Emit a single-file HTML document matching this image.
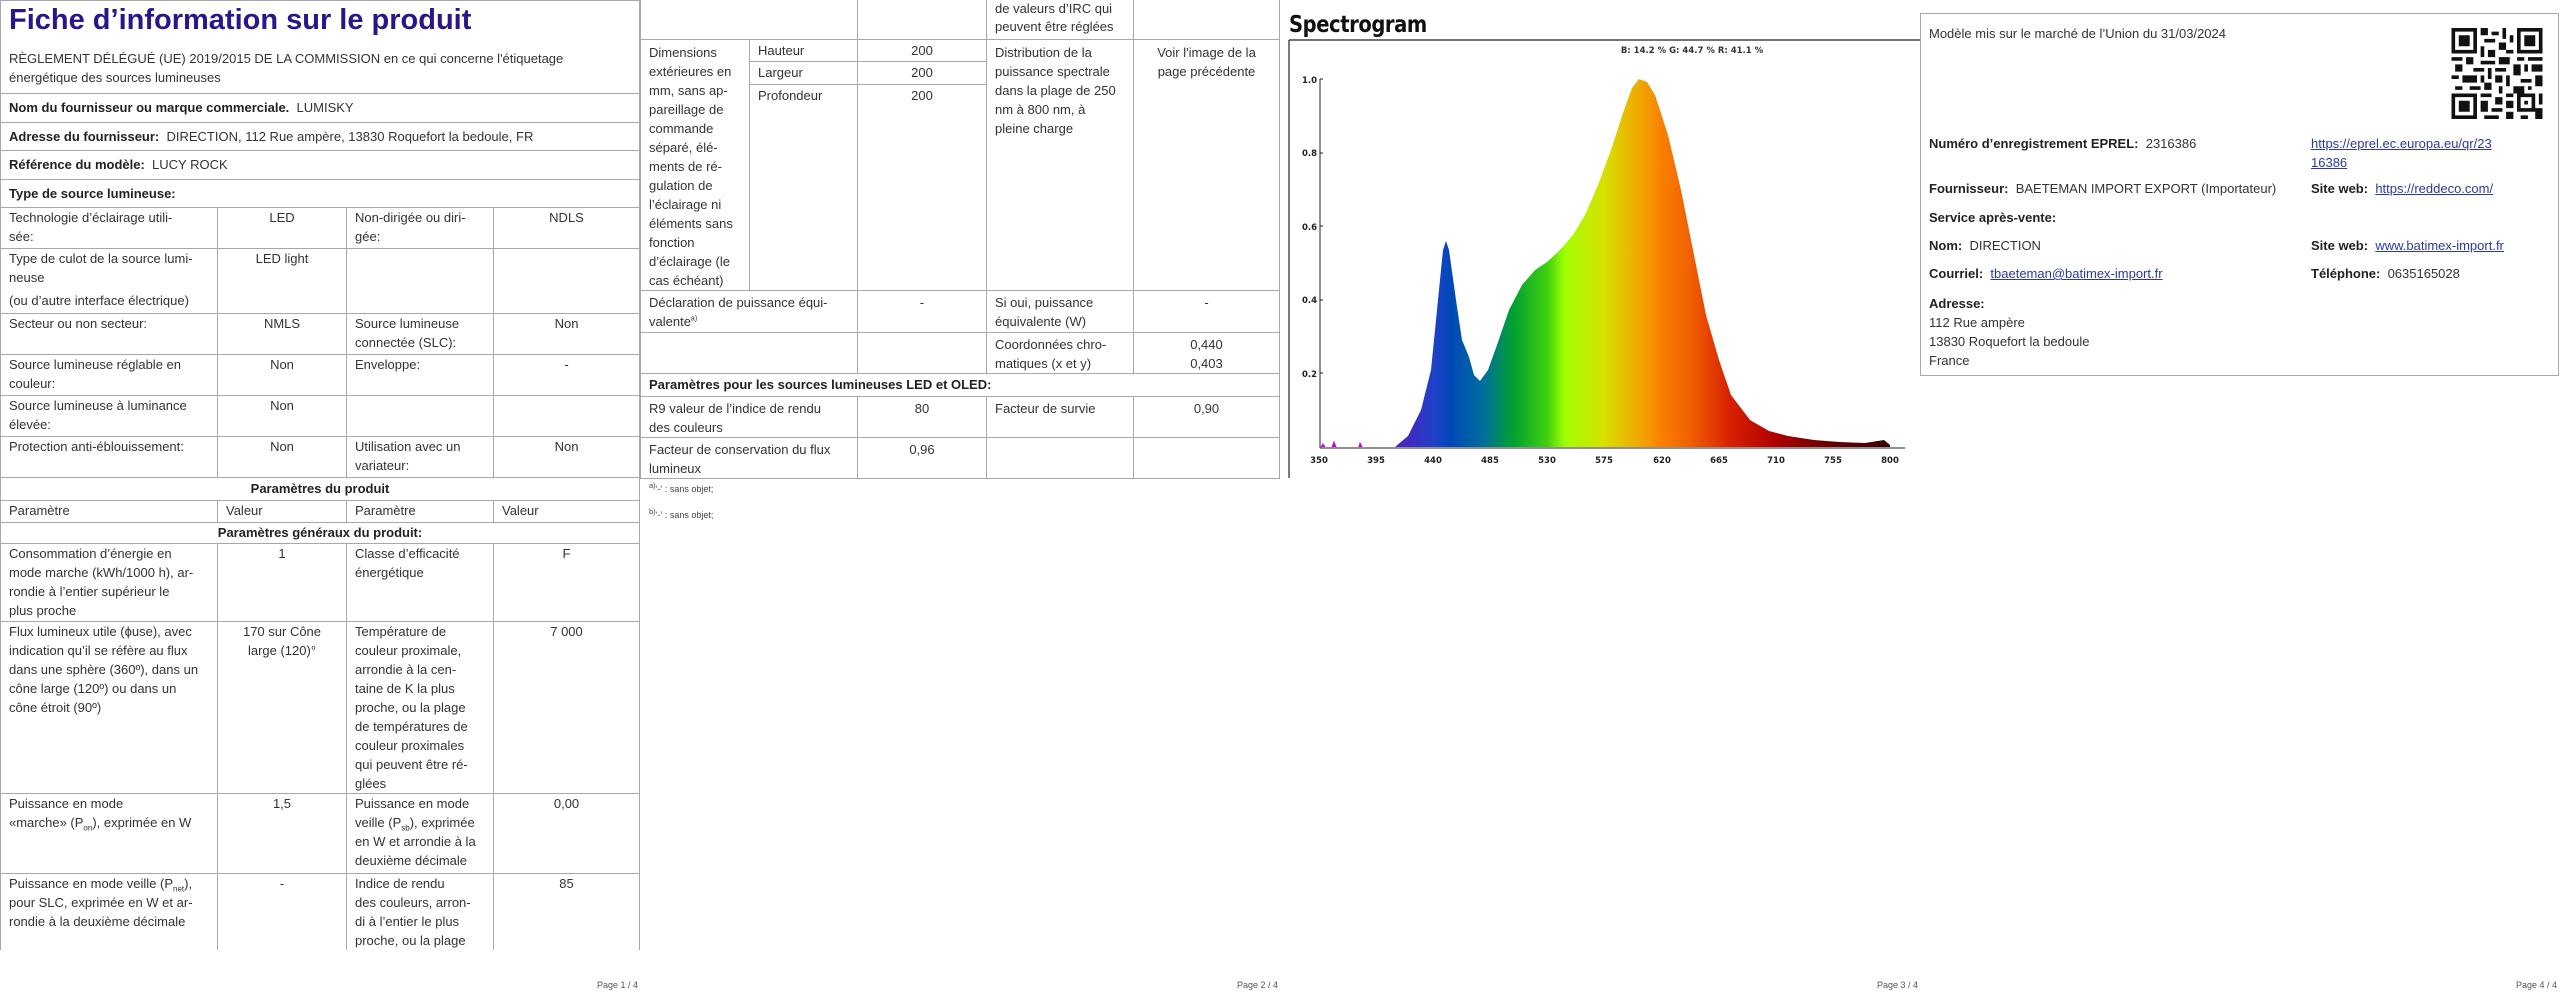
<!DOCTYPE html>
<html><head><meta charset="utf-8">
<style>
*{margin:0;padding:0;box-sizing:border-box}
body{width:2560px;height:1001px;background:#fff;position:relative;overflow:hidden;font-family:"Liberation Sans",sans-serif;color:#333;font-size:13px}
.pg{position:absolute;top:0;width:640px;height:1001px;overflow:hidden}
table{border-collapse:collapse;table-layout:fixed;position:absolute;left:0;top:0}
td{border:1px solid #a8a8a8;vertical-align:top;padding:0 8px;line-height:19px;font-size:13px;overflow:hidden;white-space:nowrap}
.c{text-align:center}
b{color:#222}
sub,sup{line-height:0}
.foot{position:absolute;top:980px;font-size:9px;color:#555}
a{color:#2b3a9c;text-decoration:underline}
</style></head><body>

<!-- PAGE 1 -->
<div class="pg" style="left:0;height:950px">
<table style="width:639px">
<colgroup><col style="width:217px"><col style="width:129px"><col style="width:147px"><col style="width:146px"></colgroup>
<tr style="height:93px"><td colspan="4" style="padding-top:2px">
<div style="font-size:29px;font-weight:bold;color:#2a168a;line-height:34px;white-space:nowrap">Fiche d’information sur le produit</div>
<div style="margin-top:12px;line-height:19px">RÈGLEMENT DÉLÉGUÉ (UE) 2019/2015 DE LA COMMISSION en ce qui concerne l'étiquetage<br>énergétique des sources lumineuses</div></td></tr>
<tr style="height:29px"><td colspan="4" style="padding-top:4px"><b>Nom du fournisseur ou marque commerciale.</b>&nbsp; LUMISKY</td></tr>
<tr style="height:28px"><td colspan="4" style="padding-top:4px"><b>Adresse du fournisseur:</b>&nbsp; DIRECTION, 112 Rue ampère, 13830 Roquefort la bedoule, FR</td></tr>
<tr style="height:29px"><td colspan="4" style="padding-top:4px"><b>Référence du modèle:</b>&nbsp; LUCY ROCK</td></tr>
<tr style="height:28px"><td colspan="4" style="padding-top:4px"><b>Type de source lumineuse:</b></td></tr>
<tr style="height:41px"><td>Technologie d’éclairage utili-<br>sée:</td><td class="c">LED</td><td>Non-dirigée ou diri-<br>gée:</td><td class="c">NDLS</td></tr>
<tr style="height:65px"><td>Type de culot de la source lumi-<br>neuse<div style="margin-top:4px">(ou d’autre interface électrique)</div></td><td class="c">LED light</td><td></td><td></td></tr>
<tr style="height:41px"><td>Secteur ou non secteur:</td><td class="c">NMLS</td><td>Source lumineuse<br>connectée (SLC):</td><td class="c">Non</td></tr>
<tr style="height:41px"><td>Source lumineuse réglable en<br>couleur:</td><td class="c">Non</td><td>Enveloppe:</td><td class="c">-</td></tr>
<tr style="height:41px"><td>Source lumineuse à luminance<br>élevée:</td><td class="c">Non</td><td></td><td></td></tr>
<tr style="height:41px"><td>Protection anti-éblouissement:</td><td class="c">Non</td><td>Utilisation avec un<br>variateur:</td><td class="c">Non</td></tr>
<tr style="height:23px"><td colspan="4" class="c" style="padding-top:1px"><b>Paramètres du produit</b></td></tr>
<tr style="height:22px"><td>Paramètre</td><td>Valeur</td><td>Paramètre</td><td>Valeur</td></tr>
<tr style="height:21px"><td colspan="4" class="c"><b>Paramètres généraux du produit:</b></td></tr>
<tr style="height:78px"><td>Consommation d’énergie en<br>mode marche (kWh/1000 h), ar-<br>rondie à l’entier supérieur le<br>plus proche</td><td class="c">1</td><td>Classe d’efficacité<br>énergétique</td><td class="c">F</td></tr>
<tr style="height:172px"><td>Flux lumineux utile (ϕuse), avec<br>indication qu’il se réfère au flux<br>dans une sphère (360º), dans un<br>cône large (120º) ou dans un<br>cône étroit (90º)</td><td class="c">170 sur Cône<br>large (120)°</td><td>Température de<br>couleur proximale,<br>arrondie à la cen-<br>taine de K la plus<br>proche, ou la plage<br>de températures de<br>couleur proximales<br>qui peuvent être ré-<br>glées</td><td class="c">7 000</td></tr>
<tr style="height:80px"><td>Puissance en mode<br>«marche» (P<sub style="font-size:8px">on</sub>), exprimée en W</td><td class="c">1,5</td><td>Puissance en mode<br>veille (P<sub style="font-size:8px">sb</sub>), exprimée<br>en W et arrondie à la<br>deuxième décimale</td><td class="c">0,00</td></tr>
<tr style="height:100px"><td>Puissance en mode veille (P<sub style="font-size:8px">net</sub>),<br>pour SLC, exprimée en W et ar-<br>rondie à la deuxième décimale</td><td class="c">-</td><td>Indice de rendu<br>des couleurs, arron-<br>di à l’entier le plus<br>proche, ou la plage</td><td class="c">85</td></tr>
</table>
</div>
<div class="foot" style="left:597px">Page 1 / 4</div>

<!-- PAGE 2 -->
<div class="pg" style="left:640px">
<table style="width:639px;top:-1px">
<colgroup><col style="width:109px"><col style="width:108px"><col style="width:129px"><col style="width:147px"><col style="width:146px"></colgroup>
<tr style="height:40px"><td colspan="2"></td><td></td><td style="line-height:18px">de valeurs d’IRC qui<br>peuvent être réglées</td><td></td></tr>
<tr style="height:22px"><td rowspan="3" style="padding-top:3px">Dimensions<br>extérieures en<br>mm, sans ap-<br>pareillage de<br>commande<br>séparé, élé-<br>ments de ré-<br>gulation de<br>l’éclairage ni<br>éléments sans<br>fonction<br>d’éclairage (le<br>cas échéant)</td><td style="padding-top:1px">Hauteur</td><td class="c" style="padding-top:1px">200</td><td rowspan="3" style="padding-top:3px">Distribution de la<br>puissance spectrale<br>dans la plage de 250<br>nm à 800 nm, à<br>pleine charge</td><td rowspan="3" class="c" style="padding-top:3px">Voir l'image de la<br>page précédente</td></tr>
<tr style="height:22px"><td style="padding-top:1px">Largeur</td><td class="c" style="padding-top:1px">200</td></tr>
<tr style="height:204px"><td style="padding-top:1px">Profondeur</td><td class="c" style="padding-top:1px">200</td></tr>
<tr style="height:42px"><td colspan="2" style="padding-top:2px">Déclaration de puissance équi-<br>valente<sup style="font-size:7px">a)</sup></td><td class="c" style="padding-top:2px">-</td><td style="padding-top:2px">Si oui, puissance<br>équivalente (W)</td><td class="c" style="padding-top:2px">-</td></tr>
<tr style="height:40px"><td colspan="2"></td><td></td><td style="padding-top:2px">Coordonnées chro-<br>matiques (x et y)</td><td class="c" style="padding-top:2px">0,440<br>0,403</td></tr>
<tr style="height:23px"><td colspan="5" style="padding-top:1px"><b>Paramètres pour les sources lumineuses LED et OLED:</b></td></tr>
<tr style="height:41px"><td colspan="2" style="padding-top:2px">R9 valeur de l’indice de rendu<br>des couleurs</td><td class="c" style="padding-top:2px">80</td><td style="padding-top:2px">Facteur de survie</td><td class="c" style="padding-top:2px">0,90</td></tr>
<tr style="height:40px"><td colspan="2" style="padding-top:2px">Facteur de conservation du flux<br>lumineux</td><td class="c" style="padding-top:2px">0,96</td><td></td><td></td></tr>
</table>
<div style="position:absolute;left:9px;top:476px;font-size:9px;line-height:26px;color:#444"><sup>a)</sup>‘-’ : sans objet;<br><sup>b)</sup>‘-’ : sans objet;</div>
</div>
<div class="foot" style="left:1237px">Page 2 / 4</div>

<!-- PAGE 3 -->
<div class="pg" style="left:1280px">
<div style="position:absolute;left:9px;top:12px;font-size:23px;font-weight:bold;color:#111;font-family:'DejaVu Sans',sans-serif;transform:scaleX(0.85);transform-origin:left;letter-spacing:-0.5px">Spectrogram</div>
<svg width="640" height="500" style="position:absolute;left:0;top:0">
<defs><linearGradient id="g" x1="39" x2="610" y1="0" y2="0" gradientUnits="userSpaceOnUse">
<stop offset="0" stop-color="#b000c0"/>
<stop offset="0.14" stop-color="#5020c0"/>
<stop offset="0.2" stop-color="#2040c8"/>
<stop offset="0.23" stop-color="#0048b8"/>
<stop offset="0.29" stop-color="#00709a"/>
<stop offset="0.34" stop-color="#00a030"/>
<stop offset="0.4" stop-color="#40d010"/>
<stop offset="0.43" stop-color="#a0ff00"/>
<stop offset="0.5" stop-color="#d8e000"/>
<stop offset="0.56" stop-color="#f0a800"/>
<stop offset="0.6" stop-color="#fa8000"/>
<stop offset="0.65" stop-color="#f06000"/>
<stop offset="0.72" stop-color="#d82000"/>
<stop offset="0.8" stop-color="#b00000"/>
<stop offset="0.88" stop-color="#700000"/>
<stop offset="1" stop-color="#300000"/>
</linearGradient></defs>
<line x1="9" y1="40" x2="640" y2="40" stroke="#222" stroke-width="1.2"/>
<line x1="9" y1="40" x2="9" y2="478" stroke="#222" stroke-width="1.2"/>
<text x="412" y="53" text-anchor="middle" font-family="DejaVu Sans" font-size="8.5" font-weight="bold" fill="#333">B: 14.2 %  G: 44.7 %  R: 41.1 %</text>
<path d="M39,447 L115,447 L128,436 L141,410 L151,370 L158,300 L163,250 L166,241 L169,250 L176,300 L182,340 L189,357 L194,375 L200,381 L208,370 L217,345 L229,310 L242,285 L255,270 L267,262 L280,250 L293,235 L305,215 L318,185 L331,150 L344,110 L352,88 L359,79 L367,82 L375,95 L388,135 L401,190 L414,255 L426,315 L439,360 L451,395 L470,420 L489,431 L508,436 L534,440 L559,442 L585,443 L604,440 L610,445 L610,447 Z" fill="url(#g)"/>
<path d="M41,447 l2,-3 l2,3 M52,447 l2,-5 l2,5 M79,447 l1,-4 l2,4" stroke="#d000d0" fill="#d000d0" stroke-width="1"/>
<line x1="40" y1="79" x2="40" y2="448" stroke="#222" stroke-width="1"/>
<line x1="40" y1="448" x2="625" y2="448" stroke="#222" stroke-width="1"/>
<g font-family="DejaVu Sans" font-size="8.5" fill="#222" font-weight="bold">
<text x="22" y="83">1.0</text><text x="22" y="156">0.8</text><text x="22" y="230">0.6</text><text x="22" y="303">0.4</text><text x="22" y="377">0.2</text>
<g text-anchor="middle">
<text x="39" y="463">350</text><text x="96" y="463">395</text><text x="153" y="463">440</text><text x="210" y="463">485</text><text x="267" y="463">530</text><text x="324" y="463">575</text><text x="382" y="463">620</text><text x="439" y="463">665</text><text x="496" y="463">710</text><text x="553" y="463">755</text><text x="610" y="463">800</text>
</g></g>
<g stroke="#222"><line x1="40" y1="79" x2="43" y2="79"/><line x1="40" y1="153" x2="43" y2="153"/><line x1="40" y1="226" x2="43" y2="226"/><line x1="40" y1="300" x2="43" y2="300"/><line x1="40" y1="373" x2="43" y2="373"/></g>
</svg>
</div>
<div class="foot" style="left:1877px">Page 3 / 4</div>

<!-- PAGE 4 -->
<div class="pg" style="left:1920px">
<div style="position:absolute;left:0;top:13px;width:639px;height:363px;border:1px solid #a8a8a8"></div>
<div style="position:absolute;left:9px;top:26px">Modèle mis sur le marché de l’Union du 31/03/2024</div>
<svg style="position:absolute;left:531px;top:28px" width="92" height="91" viewBox="0 0 25 25">
<g fill="#111">
<path d="M0,0h7v7h-7z M1,1v5h5v-5z M2,2h3v3h-3z"/>
<path d="M18,0h7v7h-7z M19,1v5h5v-5z M20,2h3v3h-3z"/>
<path d="M0,18h7v7h-7z M1,19v5h5v-5z M2,20h3v3h-3z"/>
<path d="M8,0h2v2h-2z M11,1h2v1h-2z M14,0h1v3h-1z M9,3h3v1h-3z M13,4h2v2h-2z M8,5h1v3h-1z M10,6h2v2h-2z M16,2h1v2h-1z M15,6h2v1h-2z
M0,8h3v1h-3z M4,8h2v2h-2z M8,9h4v1h-4z M13,8h3v2h-3z M18,8h2v1h-2z M21,8h4v1h-4z M1,10h2v2h-2z M6,11h3v1h-3z M10,11h1v3h-1z M12,11h3v1h-3z
M17,10h2v3h-2z M20,10h1v2h-1z M22,10h3v2h-3z M0,13h2v1h-2z M3,13h4v2h-4z M8,13h1v2h-1z M12,13h2v2h-2z M15,13h1v3h-1z M19,14h3v1h-3z M23,13h2v3h-2z
M1,16h2v1h-2z M5,16h3v1h-3z M9,15h2v2h-2z M13,16h1v2h-1z M17,16h3v2h-3z M21,16h1v1h-1z M8,18h3v1h-3z M12,19h2v2h-2z M15,18h2v1h-2z
M18,18h5v5h-5z M19,19v3h3v-3z M20,20h1v1h-1z M24,18h1v3h-1z M8,20h2v3h-2z M11,22h3v1h-3z M15,20h2v2h-2z M9,24h4v1h-4z M15,23h2v2h-2z M19,24h2v1h-2z M23,22h2v3h-2z"/>
</g></svg>
<div style="position:absolute;left:9px;top:134px;line-height:19px"><b>Numéro d’enregistrement EPREL:</b>&nbsp; 2316386</div>
<div style="position:absolute;left:391px;top:134px;line-height:19px"><a>https://eprel.ec.europa.eu/qr/23</a><br><a>16386</a></div>
<div style="position:absolute;left:9px;top:181px"><b>Fournisseur:</b>&nbsp; BAETEMAN IMPORT EXPORT (Importateur)</div>
<div style="position:absolute;left:391px;top:181px"><b>Site web:</b>&nbsp; <a>https://reddeco.com/</a></div>
<div style="position:absolute;left:9px;top:210px"><b>Service après-vente:</b></div>
<div style="position:absolute;left:9px;top:238px"><b>Nom:</b>&nbsp; DIRECTION</div>
<div style="position:absolute;left:391px;top:238px"><b>Site web:</b>&nbsp; <a>www.batimex-import.fr</a></div>
<div style="position:absolute;left:9px;top:266px"><b>Courriel:</b>&nbsp; <a>tbaeteman@batimex-import.fr</a></div>
<div style="position:absolute;left:391px;top:266px"><b>Téléphone:</b>&nbsp; 0635165028</div>
<div style="position:absolute;left:9px;top:294px;line-height:19px"><b>Adresse:</b><br>112 Rue ampère<br>13830 Roquefort la bedoule<br>France</div>
</div>
<div class="foot" style="left:2516px">Page 4 / 4</div>

</body></html>
